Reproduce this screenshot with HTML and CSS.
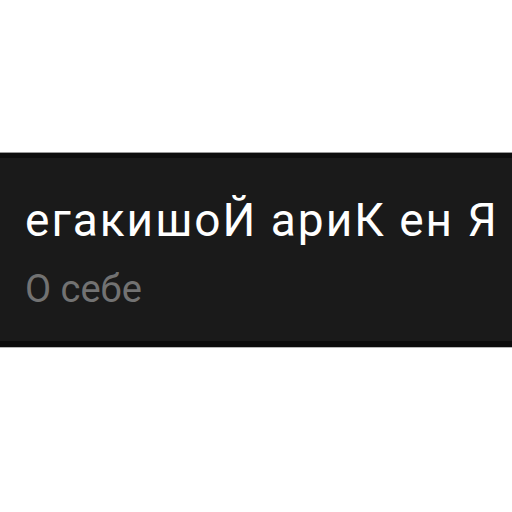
FILE: index.html
```html
<!DOCTYPE html>
<html lang="ru">
<head>
<meta charset="utf-8">
<link rel="stylesheet" href="styles.css">
</head>
<body>
<div class="page">
  <section class="card">
    <div class="title">егакишоЙ ариК ен Я</div>
    <div class="subtitle">О себе</div>
  </section>
</div>
</body>
</html>
```
FILE: styles.css
```css
html, body {
  margin: 0;
  padding: 0;
  background: #ffffff;
}
.page {
  width: 512px;
  height: 512px;
  padding-top: 152px;
  box-sizing: border-box;
}
.card {
  height: 196px;
  box-sizing: border-box;
  background: #1a1a1a;
  border-top: 1px solid #9a9a9a;
  border-bottom: 1px solid #b8b8b8;
  box-shadow: inset 0 5px 0 #0e0e0e, inset 0 -6px 0 #0c0c0c;
  padding-left: 25px;
  font-family: Roboto, "Noto Sans", sans-serif;
}
.title {
  color: #ffffff;
  font-size: 46px;
  letter-spacing: 2px;
  line-height: 1;
  padding-top: 44px;
  white-space: nowrap;
}
.subtitle {
  color: #727272;
  font-size: 38px;
  line-height: 1;
  padding-top: 27px;
}
```
